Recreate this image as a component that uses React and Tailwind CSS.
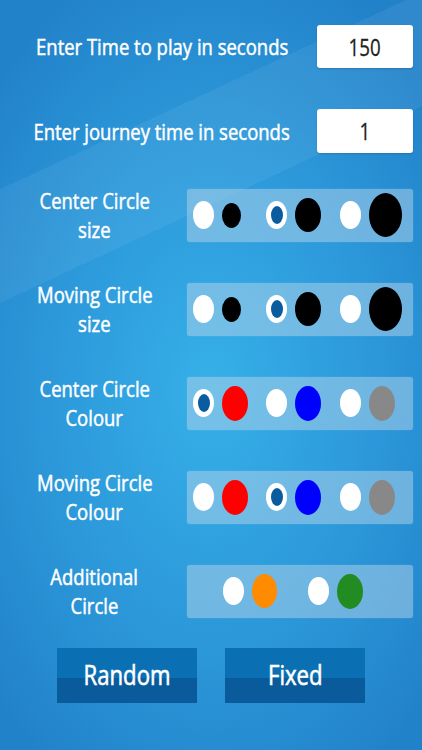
import React from "react";

const font = { fontFamily: '"Open Sans", "Noto Sans", sans-serif' };

function Oval({ w, h, color, ring }) {
  return (
    <span
      className="flex items-center justify-center rounded-[50%] shrink-0"
      style={{ width: w, height: h, backgroundColor: color }}
    >
      {ring && <span className="block w-[12px] h-[18px] rounded-[50%] bg-[#0b5c9e]" />}
    </span>
  );
}

function Pair({ selected, color, w, h }) {
  return (
    <div className="flex items-center gap-[8px]">
      <Oval w={21} h={28} color="#ffffff" ring={selected} />
      <Oval w={w} h={h} color={color} />
    </div>
  );
}

function Label({ lines }) {
  return (
    <div className="w-[187px] pl-[2px] flex flex-col items-center text-white text-[22px] leading-[29px] [-webkit-text-stroke:0.5px_white]">
      {lines.map((l) => (
        <span key={l} className="inline-block shrink-0 scale-x-[0.84] whitespace-nowrap">
          {l}
        </span>
      ))}
    </div>
  );
}

function Panel({ children, className = "" }) {
  return (
    <div className={"w-[226px] h-[53px] rounded-[3px] bg-[#b4d4ea]/50 shadow-[0_0_1px_rgba(255,255,255,0.4)] " + className}>
      {children}
    </div>
  );
}

function SizeRow({ lines, sel }) {
  return (
    <div className="flex items-center">
      <Label lines={lines} />
      <Panel className="grid grid-cols-3 items-center pl-[6px]">
        <Pair selected={sel === 0} color="#000" w={19} h={25} />
        <Pair selected={sel === 1} color="#000" w={26} h={34} />
        <Pair selected={sel === 2} color="#000" w={33} h={44} />
      </Panel>
    </div>
  );
}

function ColourRow({ lines, sel }) {
  return (
    <div className="flex items-center">
      <Label lines={lines} />
      <Panel className="grid grid-cols-3 items-center pl-[6px]">
        <Pair selected={sel === 0} color="#ff0000" w={26} h={35} />
        <Pair selected={sel === 1} color="#0000ff" w={26} h={35} />
        <Pair selected={sel === 2} color="#888888" w={26} h={35} />
      </Panel>
    </div>
  );
}

function TopRow({ label, value, h, className = "" }) {
  return (
    <div className={"flex items-center " + className} style={{ height: h }}>
      <div className="w-[310px] pl-[14px] flex justify-center text-white text-[22px] [-webkit-text-stroke:0.5px_white]">
        <span className="inline-block shrink-0 scale-x-[0.84] whitespace-nowrap">{label}</span>
      </div>
      <div
        className="ml-[7px] w-[96px] bg-white rounded-[3px] flex items-center justify-center text-[#222] text-[24px] [-webkit-text-stroke:0.3px_#222] shadow-[0_1px_2px_rgba(0,0,0,0.15)]"
        style={{ height: h }}
      >
        <span className="inline-block scale-x-[0.78]">{value}</span>
      </div>
    </div>
  );
}

export default function App() {
  return (
    <div
      className="w-[422px] h-[750px] overflow-hidden relative bg-[radial-gradient(ellipse_70%_60%_at_50%_52%,#36b0e8_0%,#2c98da_55%,#2282c9_100%)]"
      style={font}
    >
      <div className="absolute inset-0 pointer-events-none bg-[linear-gradient(155deg,transparent_0%,transparent_20%,rgba(255,255,255,0.06)_20%,rgba(255,255,255,0.06)_32%,transparent_32%,transparent_100%)]" />
      <div className="relative flex flex-col pt-[25px]">
        <TopRow label="Enter Time to play in seconds" value="150" h={43} />
        <TopRow label="Enter journey time in seconds" value="1" h={44} className="mt-[41px]" />

        <div className="flex flex-col gap-[36px] mt-[33px]">
          <SizeRow lines={["Center Circle", "size"]} sel={1} />
          <SizeRow lines={["Moving Circle", "size"]} sel={1} />
          <ColourRow lines={["Center Circle", "Colour"]} sel={0} />
          <ColourRow lines={["Moving Circle", "Colour"]} sel={1} />
          <div className="flex items-center">
            <Label lines={["Additional", "Circle"]} />
            <Panel className="flex items-center pl-[36px]">
              <div className="w-[85px]">
                <Pair selected={false} color="#ff8c00" w={25} h={34} />
              </div>
              <div className="w-[85px]">
                <Pair selected={false} color="#228b22" w={26} h={35} />
              </div>
            </Panel>
          </div>
        </div>

        <div className="flex justify-center gap-[28px] mt-[28px]">
          {["Random", "Fixed"].map((t) => (
            <button
              key={t}
              className="w-[140px] h-[55px] bg-[linear-gradient(#0b70b3_0%,#0b70b3_55%,#0a5b9c_55%,#0a5b9c_100%)] text-white text-[27px] [-webkit-text-stroke:0.6px_white] flex items-center justify-center"
            >
              <span className="inline-block scale-x-[0.82]">{t}</span>
            </button>
          ))}
        </div>
      </div>
    </div>
  );
}
